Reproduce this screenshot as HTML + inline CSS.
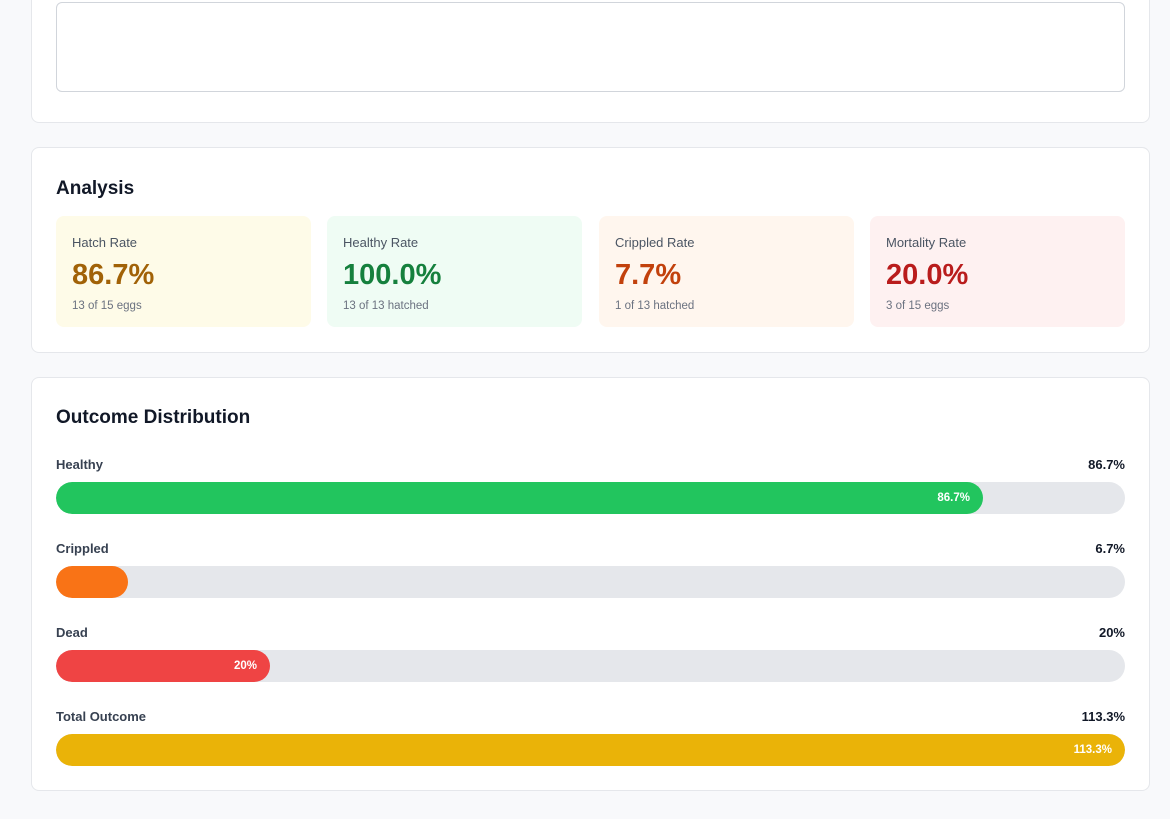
<!DOCTYPE html>
<html><head><style>
*{box-sizing:border-box;margin:0;padding:0}
body{width:1170px;height:819px;background:#f8f9fb;font-family:"Liberation Sans",sans-serif;position:relative;overflow:hidden;color:#111827}
.card{position:absolute;left:31px;width:1119px;background:#fff;border:1px solid #e5e7eb;border-radius:8px}
.ta{position:absolute;left:24px;width:1069px;height:90px;border:1px solid #d1d5db;border-radius:6px}
h2{position:absolute;left:24px;font-size:19px;font-weight:600;color:#111827}
.stat{position:absolute;top:68px;width:255px;height:111px;border-radius:8px;padding:19px 16px}
.stat .l{font-size:13px;color:#4b5563}
.stat .v{font-size:29px;font-weight:700;margin-top:8px;line-height:34px}
.stat .s{font-size:11.5px;color:#6b7280;margin-top:8px}
.row{position:absolute;left:24px;width:1069px}
.row .lab{display:flex;justify-content:space-between;font-size:13px;font-weight:700;color:#374151}
.row .lab b{color:#111827}
.track{margin-top:10px;height:32px;background:#e5e7eb;border-radius:16px;overflow:hidden}
.fill{height:32px;border-radius:16px;color:#fff;font-size:11.5px;font-weight:700;text-align:right;padding-right:13px;line-height:32px}
</style></head><body>
<div class="card" style="top:-10px;height:133px"><div class="ta" style="top:11px"></div></div>
<div class="card" style="top:147px;height:206px">
<h2 style="top:30px">Analysis</h2>
<div class="stat" style="left:24px;background:#fefbe8"><div class="l">Hatch Rate</div><div class="v" style="color:#a16207">86.7%</div><div class="s">13 of 15 eggs</div></div>
<div class="stat" style="left:295px;background:#effcf4"><div class="l">Healthy Rate</div><div class="v" style="color:#15803d">100.0%</div><div class="s">13 of 13 hatched</div></div>
<div class="stat" style="left:567px;background:#fff6ee"><div class="l">Crippled Rate</div><div class="v" style="color:#c2410c">7.7%</div><div class="s">1 of 13 hatched</div></div>
<div class="stat" style="left:838px;background:#fef1f1"><div class="l">Mortality Rate</div><div class="v" style="color:#b91c1c">20.0%</div><div class="s">3 of 15 eggs</div></div>
</div>
<div class="card" style="top:377px;height:414px">
<h2 style="top:29px">Outcome Distribution</h2>
<div class="row" style="top:79px"><div class="lab"><span>Healthy</span><b>86.7%</b></div><div class="track"><div class="fill" style="width:927px;background:#22c55e">86.7%</div></div></div>
<div class="row" style="top:163px"><div class="lab"><span>Crippled</span><b>6.7%</b></div><div class="track"><div class="fill" style="width:72px;background:#f97316"></div></div></div>
<div class="row" style="top:247px"><div class="lab"><span>Dead</span><b>20%</b></div><div class="track"><div class="fill" style="width:214px;background:#ef4444">20%</div></div></div>
<div class="row" style="top:331px"><div class="lab"><span>Total Outcome</span><b>113.3%</b></div><div class="track"><div class="fill" style="width:1069px;background:#eab308">113.3%</div></div></div>
</div>
</body></html>
